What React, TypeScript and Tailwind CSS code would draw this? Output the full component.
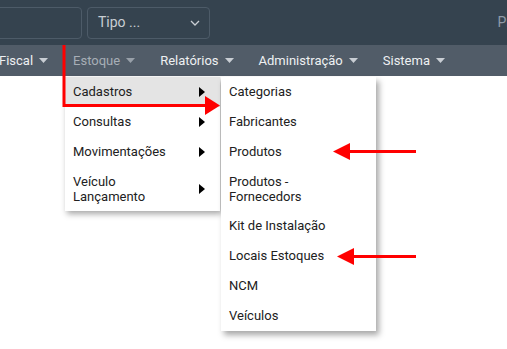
import React from "react";

const navItems = [
  { label: "Fiscal", muted: false },
  { label: "Estoque", muted: true },
  { label: "Relatórios", muted: false },
  { label: "Administração", muted: false },
  { label: "Sistema", muted: false },
];

const estoqueMenu = [
  { label: "Cadastros", active: true },
  { label: "Consultas" },
  { label: "Movimentações" },
  { label: "Veículo\nLançamento" },
];

const cadastrosMenu = [
  "Categorias",
  "Fabricantes",
  "Produtos",
  "Produtos -\nFornecedors",
  "Kit de Instalação",
  "Locais Estoques",
  "NCM",
  "Veículos",
];

function Caret({ muted }: { muted: boolean }) {
  return (
    <svg className="ml-[6px] h-[5px] w-[9px]" viewBox="0 0 9 5">
      <path d="M0 0h9L4.5 5z" fill={muted ? "#98a0a9" : "#c9ced4"} />
    </svg>
  );
}

function RightTri() {
  return (
    <svg className="h-[10px] w-[6px]" viewBox="0 0 6 10">
      <path d="M0 0l6 5-6 5z" fill="#000" />
    </svg>
  );
}

export default function App() {
  return (
    <div
      className="relative h-[349px] w-[507px] overflow-hidden bg-white"
      style={{ fontFamily: "Roboto, 'Noto Sans', sans-serif" }}
    >
      {/* top bar */}
      <div className="flex h-[45px] items-center gap-[5px] bg-[#35434f]">
        <div className="ml-[-20px] h-[32px] w-[102px] rounded-[4px] border border-[#4d5b68]" />
        <div className="flex h-[32px] w-[123px] items-center justify-between rounded-[4px] border border-[#4d5b68] pl-[10px] pr-[9px] text-[14px] text-[#c9ced3]">
          <span>Tipo ...</span>
          <svg className="h-[6px] w-[10px]" viewBox="0 0 10 6">
            <path d="M1 1l4 4 4-4" fill="none" stroke="#c9ced3" strokeWidth="1.3" />
          </svg>
        </div>
        <span className="ml-auto mr-[-4px] text-[14px] text-[#8e9aa7]">Pr</span>
      </div>

      {/* nav bar */}
      <div className="flex h-[31px] items-center gap-[25px] bg-[#515c68] text-[13px]">
        {navItems.map((n, i) => (
          <div
            key={n.label}
            className={`flex items-center ${n.muted ? "text-[#a7aeb6]" : "text-[#eef0f2]"} ${
              i === 0 ? "ml-[-1px]" : ""
            }`}
          >
            {n.label}
            <Caret muted={n.muted} />
          </div>
        ))}
      </div>

      {/* Estoque dropdown */}
      <div className="absolute left-[65px] top-[77px] w-[155px] bg-white shadow-[2px_3px_6px_rgba(0,0,0,0.35)] text-[13px] text-[#212121]">
        {estoqueMenu.map((m) => {
          const two = m.label.includes("\n");
          return (
            <div
              key={m.label}
              className={`flex items-center justify-between py-[7px] pl-[8px] pr-[15px] ${
                two ? "leading-[15px]" : "leading-[16px]"
              } ${m.active ? "bg-[#e4e4e4]" : ""}`}
            >
              <span className="whitespace-pre-line">{m.label}</span>
              <RightTri />
            </div>
          );
        })}
      </div>

      {/* Cadastros submenu */}
      <div className="absolute left-[221px] top-[77px] w-[155px] bg-white shadow-[3px_4px_6px_rgba(0,0,0,0.35)] text-[13px] text-[#212121]">
        {cadastrosMenu.map((c) => (
          <div
            key={c}
            className={`whitespace-pre-line py-[7px] pl-[8px] ${
              c.includes("\n") ? "leading-[15px]" : "leading-[16px]"
            }`}
          >
            {c}
          </div>
        ))}
      </div>

      {/* annotations */}
      <svg className="pointer-events-none absolute left-0 top-0" width="507" height="349">
        <path d="M64 45V105.5H208" fill="none" stroke="#ff0000" strokeWidth="3" />
        <path d="M205 96L220 105.5L205 115z" fill="#ff0000" />
        <path d="M348 151.5H416" stroke="#ff0000" strokeWidth="3" />
        <path d="M333 151.5L350 143V160z" fill="#ff0000" />
        <path d="M352 256.5H416" stroke="#ff0000" strokeWidth="3" />
        <path d="M337 256.5L354 248V265z" fill="#ff0000" />
      </svg>
    </div>
  );
}
